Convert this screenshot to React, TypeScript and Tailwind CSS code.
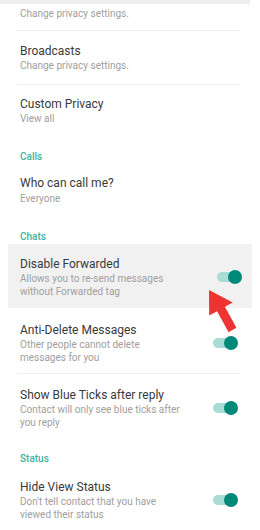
import React from "react";

const Title = ({ children }: { children: React.ReactNode }) => (
  <div className="text-[12px] leading-[16px] text-[#3a3a3a] whitespace-nowrap">{children}</div>
);
const Sub = ({ lines }: { lines: string[] }) => (
  <div className="text-[10px] leading-[13px] text-[#a0a0a0] whitespace-nowrap">
    {lines.map((l, i) => (
      <div key={i}>{l}</div>
    ))}
  </div>
);
const Header = ({ children, cls }: { children: React.ReactNode; cls: string }) => (
  <div className={`pl-[20px] text-[10px] leading-[14px] font-medium text-[#3bb3a3] ${cls}`}>{children}</div>
);
const Divider = () => <div className="ml-[17px] w-[223px] h-px bg-[#efefef]" />;

const Switch = () => (
  <div className="w-[22px] h-[10px] rounded-full bg-[#a9dcd4] flex items-center justify-end">
    <div className="w-[14px] h-[14px] -mr-[3px] rounded-full bg-[#00897b] shrink-0" />
  </div>
);

const ToggleRow = ({ title, lines, cls }: { title: string; lines: string[]; cls: string }) => (
  <div className={`flex items-center justify-between ${cls}`}>
    <div>
      <Title>{title}</Title>
      <Sub lines={lines} />
    </div>
    <Switch />
  </div>
);

export default function App() {
  return (
    <div
      className="relative w-[260px] h-[530px] bg-white overflow-hidden"
      style={{ fontFamily: "Roboto, 'Liberation Sans', sans-serif" }}
    >
      <div className="h-[4px] w-[250px] bg-[#eeeeee]" />
      <div className="pl-[20px] pt-[3px] pb-[10px]">
        <Sub lines={["Change privacy settings."]} />
      </div>
      <Divider />
      <div className="pl-[20px] pt-[12px] pb-[12px]">
        <Title>Broadcasts</Title>
        <Sub lines={["Change privacy settings."]} />
      </div>
      <Divider />
      <div className="pl-[20px] pt-[11px]">
        <Title>Custom Privacy</Title>
        <Sub lines={["View all"]} />
      </div>
      <Header cls="mt-[25px]">Calls</Header>
      <div className="pl-[20px] pt-[11px]">
        <Title>Who can call me?</Title>
        <div className="mt-[1px]">
          <Sub lines={["Everyone"]} />
        </div>
      </div>
      <Header cls="mt-[25px]">Chats</Header>
      <div className="mx-[8px] bg-[#f1f1f1]">
        <ToggleRow
          cls="pt-[12px] pb-[10px] pl-[12px] pr-[13px]"
          title="Disable Forwarded"
          lines={["Allows you to re-send messages", "without Forwarded tag"]}
        />
      </div>
      <ToggleRow
        cls="pt-[14px] pb-[9px] pl-[20px] pr-[25px]"
        title="Anti-Delete Messages"
        lines={["Other people cannot delete", "messages for you"]}
      />
      <Divider />
      <ToggleRow
        cls="pt-[13px] pl-[20px] pr-[25px]"
        title="Show Blue Ticks after reply"
        lines={["Contact will only see blue ticks after", "you reply"]}
      />
      <Header cls="mt-[23px]">Status</Header>
      <ToggleRow
        cls="pt-[13px] pl-[20px] pr-[25px]"
        title="Hide View Status"
        lines={["Don't tell contact that you have", "viewed their status"]}
      />

      <svg className="absolute left-[200px] top-[285px]" width="40" height="50" viewBox="0 0 40 50">
        <polygon
          points="9,5 32.8,17.5 24.9,21.8 36.4,42.8 28.6,47.2 17.05,26.2 9.2,30.5"
          fill="#ee3432"
        />
      </svg>
    </div>
  );
}
